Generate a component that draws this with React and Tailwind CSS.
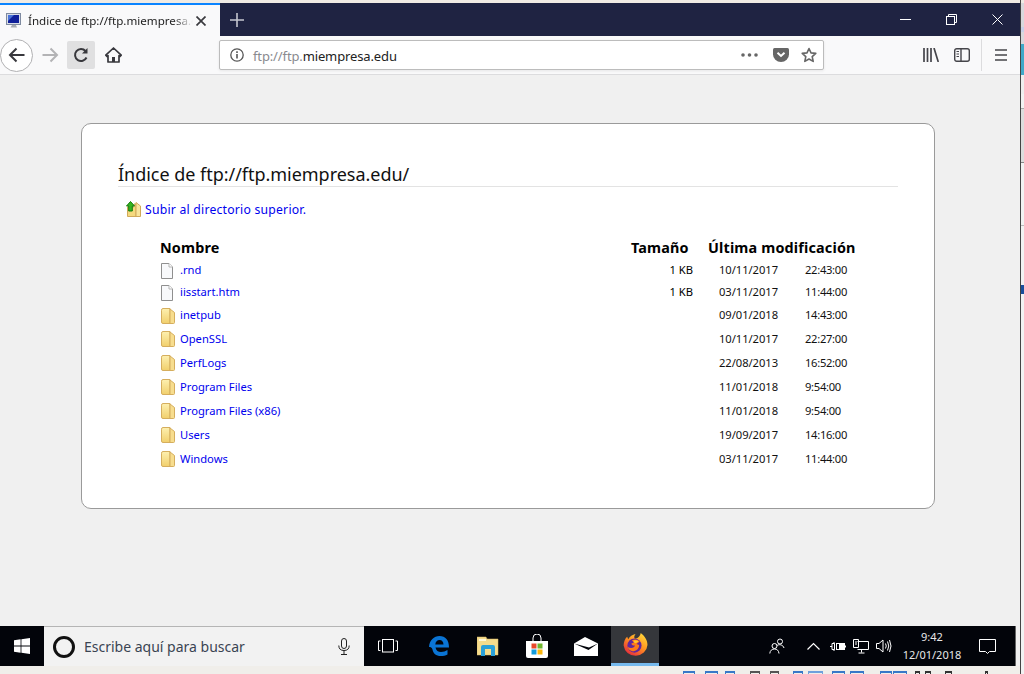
import React from "react";

const font = { fontFamily: '"Noto Sans", "Open Sans", sans-serif' };

function Slot({ w, className = "", children }) {
  return <div className={`flex items-center justify-center shrink-0 h-full ${className}`} style={{ width: w }}>{children}</div>;
}

function FolderIcon() {
  return (
    <svg width="14" height="16" viewBox="0 0 14 16">
      <defs>
        <linearGradient id="fg" x1="0" y1="0" x2="0" y2="1">
          <stop offset="0" stopColor="#fdf0b0" />
          <stop offset="1" stopColor="#f1cf6c" />
        </linearGradient>
      </defs>
      <path d="M.5 2.2Q.5.5 2 .5H9V15.5H2Q.5 15.5 .5 14Z" fill="url(#fg)" stroke="#d5ae5e" />
      <path d="M9 1 13.5 4.5V14.5Q13.5 15.5 12.5 15.5H9Z" fill="#f7dd8e" stroke="#d5ae5e" />
    </svg>
  );
}

function FileIcon() {
  return (
    <svg width="12" height="16" viewBox="0 0 12 16">
      <path d="M.5.5H8L11.5 4V15.5H.5Z" fill="#f8f9fb" stroke="#8f8f8f" />
      <path d="M8 .5V4H11.5" fill="#fff" stroke="#b5b5b5" />
    </svg>
  );
}

function UpIcon() {
  return (
    <svg width="15" height="17" viewBox="0 0 15 17" className="mb-[2px] shrink-0">
      <path d="M1.5 6V15.5H10V3H8V6Z" fill="#f5d97e" stroke="#d0a95a" />
      <path d="M10 1.5 14.5 5V15.5H10Z" fill="#f9e59c" stroke="#d0a95a" />
      <path d="M4.5.5 8.5 5H6.3V10H2.7V5H.5Z" fill="#35b51f" stroke="#157a0d" />
    </svg>
  );
}

const rows = [
  ["file", ".rnd", "1 KB", "10/11/2017", "22:43:00", "h-[21px]"],
  ["file", "iisstart.htm", "1 KB", "03/11/2017", "11:44:00", "h-[23px]"],
  ["dir", "inetpub", "", "09/01/2018", "14:43:00", "h-[23px]"],
  ["dir", "OpenSSL", "", "10/11/2017", "22:27:00", "h-6"],
  ["dir", "PerfLogs", "", "22/08/2013", "16:52:00", "h-6"],
  ["dir", "Program Files", "", "11/01/2018", "9:54:00", "h-6"],
  ["dir", "Program Files (x86)", "", "11/01/2018", "9:54:00", "h-6"],
  ["dir", "Users", "", "19/09/2017", "14:16:00", "h-6"],
  ["dir", "Windows", "", "03/11/2017", "11:44:00", "h-6"],
];

function Row({ type, name, size, date, time, h }) {
  return (
    <div className={`flex items-center text-[11.2px] ${h}`}>
      <div className="w-[20px] flex justify-start pl-[1px] shrink-0">
        {type === "file" ? <FileIcon /> : <FolderIcon />}
      </div>
      <a className="w-[420px] shrink-0 text-[#0000ee]">{name}</a>
      <div className="w-[93px] shrink-0 text-right text-black">{size}</div>
      <div className="w-[26px] shrink-0" />
      <div className="w-[86px] shrink-0 text-[#111] tracking-[-0.05px]">{date}</div>
      <div className="text-[#111] tracking-[-0.3px]">{time}</div>
    </div>
  );
}

function TabStrip() {
  return (
    <div className="h-[33px] flex bg-[#1f2342] shrink-0">
      <div className="w-[220px] bg-[#f9f9fa] border-t-[2px] border-[#0a84ff] flex items-center pl-[6px] shrink-0">
        <svg width="16" height="16" viewBox="0 0 16 16" className="shrink-0">
          <rect x=".5" y=".5" width="14" height="11" fill="#d9dde6" stroke="#7e8aa0" />
          <rect x="2" y="2" width="11" height="8" fill="#10209a" />
          <path d="M2 2H8L2 8Z" fill="#4a73d8" />
          <path d="M6 12H10L11 14.5H4.5Z" fill="#a7abb2" />
        </svg>
        <span className="ml-[6px] w-[165px] text-[11.6px] text-[#222] whitespace-nowrap [mask-image:linear-gradient(to_right,black_88%,transparent)]">Índice de ftp://ftp.miempresa.e</span>
        <svg width="10" height="10" viewBox="0 0 10 10" className="ml-[3px]">
          <path d="M.5.5 9.5 9.5M9.5.5.5 9.5" stroke="#3a3a3e" strokeWidth="1.7" />
        </svg>
      </div>
      <Slot w={33}>
        <svg width="14" height="14" viewBox="0 0 14 14"><path d="M7 0V14M0 7H14" stroke="#c5c6cf" strokeWidth="1.6" /></svg>
      </Slot>
      <div className="flex-1" />
      <Slot w={46}><svg width="11" height="11" viewBox="0 0 11 11"><path d="M0 5.5H11" stroke="#fff" /></svg></Slot>
      <Slot w={46}>
        <svg width="11" height="11" viewBox="0 0 11 11" fill="none" stroke="#fff"><rect x=".5" y="2.5" width="8" height="8" /><path d="M2.5 2.5V.5H10.5V8.5H8.5" /></svg>
      </Slot>
      <Slot w={46}><svg width="11" height="11" viewBox="0 0 11 11"><path d="M.5.5 10.5 10.5M10.5.5.5 10.5" stroke="#fff" /></svg></Slot>
    </div>
  );
}

function Toolbar() {
  return (
    <div className="h-[39px] bg-[#f9f9fa] border-b border-[#dcdcde] flex items-center shrink-0">
      <div className="w-[33px] h-[33px] shrink-0 rounded-full bg-white border border-[#b1b1b3] flex items-center justify-center">
        <svg width="17" height="16" viewBox="0 0 17 16" fill="none" stroke="#38383d" strokeWidth="2"><path d="M16.5 8H2M8.5 1.5 2 8 8.5 14.5" /></svg>
      </div>
      <Slot w={34}>
        <svg width="17" height="16" viewBox="0 0 17 16" fill="none" stroke="#b3b3b5" strokeWidth="2"><path d="M.5 8H15M8.5 1.5 15 8 8.5 14.5" /></svg>
      </Slot>
      <div className="w-[28px] h-[28px] bg-[#e0e0e1] rounded-[2px] shrink-0 flex items-center justify-center">
        <svg width="16" height="16" viewBox="0 0 16 16" fill="none" stroke="#38383d" strokeWidth="2">
          <path d="M13.5 10.5A6 6 0 1 1 12.5 4" />
          <path d="M14.5 1V6.5H9" fill="#38383d" stroke="none" />
        </svg>
      </div>
      <Slot w={36}>
        <svg width="17" height="16" viewBox="0 0 17 16">
          <path d="M8.5 1 .8 8.2 2 9.5 3 8.6V15H14V8.6L15 9.5 16.2 8.2Z" fill="none" stroke="#38383d" strokeWidth="1.7" strokeLinejoin="round" />
          <rect x="7" y="10" width="3" height="5" fill="#38383d" />
        </svg>
      </Slot>
      <div className="w-[88px] shrink-0" />
      <div className="w-[605px] h-[30px] shrink-0 bg-white border border-[#bcbcbc] rounded-[2px] flex items-center shadow-[0_1px_3px_rgba(0,0,0,0.08)]">
        <Slot w={33}>
          <svg width="14" height="14" viewBox="0 0 14 14" fill="none" stroke="#555"><circle cx="7" cy="7" r="6.2" strokeWidth="1.3" /><path d="M7 6V10.5" strokeWidth="1.6" /><path d="M7 3.2V5" strokeWidth="1.6" /></svg>
        </Slot>
        <div className="text-[13px] flex-1 tracking-[-0.13px] pt-[3px]"><span className="text-[#8a8a8f]">ftp://ftp.</span><span className="text-[#222]">miempresa.edu</span></div>
        <Slot w={24}>
          <svg width="17" height="4" viewBox="0 0 17 4" fill="#666"><circle cx="2" cy="2" r="1.8" /><circle cx="8.5" cy="2" r="1.8" /><circle cx="15" cy="2" r="1.8" /></svg>
        </Slot>
        <div className="w-[8px]" />
        <Slot w={24}>
          <svg width="16" height="14" viewBox="0 0 16 14"><path d="M1.5 0H14.5Q16 0 16 1.5V6.5A8 7.5 0 0 1 0 6.5V1.5Q0 0 1.5 0Z" fill="#666" /><path d="M4.5 4.8 8 8 11.5 4.8" fill="none" stroke="#fff" strokeWidth="2" /></svg>
        </Slot>
        <div className="w-[4px]" />
        <Slot w={24}>
          <svg width="16" height="16" viewBox="0 0 16 16"><path d="M8 1.5 10 5.9 14.8 6.4 11.2 9.6 12.2 14.4 8 12 3.8 14.4 4.8 9.6 1.2 6.4 6 5.9Z" fill="none" stroke="#666" strokeWidth="1.6" strokeLinejoin="round" /></svg>
        </Slot>
        <div className="w-[2px]" />
      </div>
      <div className="w-[98px] shrink-0" />
      <Slot w={18}>
        <svg width="16" height="14" viewBox="0 0 16 14" stroke="#45454a" strokeWidth="1.7"><path d="M1 0V14M4.5 0V14M8 0V14M11 0 15.3 14" fill="none" /></svg>
      </Slot>
      <div className="w-[13px] shrink-0" />
      <Slot w={18}>
        <svg width="16" height="14" viewBox="0 0 16 14" fill="none" stroke="#45454a" strokeWidth="1.4"><rect x=".7" y=".7" width="14.6" height="12.6" rx="2" /><path d="M7 .7V13.3" /><path d="M2.5 3.5H5M2.5 6H5M2.5 8.5H5" strokeWidth="1.2" /></svg>
      </Slot>
      <div className="w-[10px] shrink-0" />
      <div className="w-px h-[32px] bg-[#dcdcde] shrink-0" />
      <div className="w-[13px] shrink-0" />
      <Slot w={12}>
        <svg width="12" height="12" viewBox="0 0 12 12" stroke="#45454a" strokeWidth="1.7"><path d="M0 1H12M0 6H12M0 11H12" /></svg>
      </Slot>
    </div>
  );
}

function Card() {
  return (
    <div className="ml-[81px] mt-[48px] w-[854px] h-[386px] bg-white border border-[#9a9a9a] rounded-[10px] pl-[36px] pr-[36px] pt-[37px] text-[#111] shrink-0">
      <h1 className="text-[18px] leading-[26px] border-b border-[#e3e3e3] h-[26px] text-[#111] tracking-[-0.03px]">Índice de ftp://ftp.miempresa.edu/</h1>
      <div className="flex items-center mt-[15px] ml-[8px] h-[17px]">
        <UpIcon />
        <a className="ml-[4px] text-[12.2px] text-[#0000ee] tracking-[0.23px]">Subir al directorio superior.</a>
      </div>
      <div className="ml-[42px] mt-[18px] w-[720px]">
        <div className="flex h-[21px] items-center font-bold text-[14.4px] text-black tracking-[0.16px]">
          <div className="w-[471px] shrink-0">Nombre</div>
          <div className="w-[77px] shrink-0">Tamaño</div>
          <div>Última modificación</div>
        </div>
        <div className="mt-[2px]">
          {rows.map((r) => <Row key={r[1]} type={r[0]} name={r[1]} size={r[2]} date={r[3]} time={r[4]} h={r[5]} />)}
        </div>
      </div>
    </div>
  );
}

function FirefoxIcon() {
  return (
    <svg width="25" height="25" viewBox="0 0 24 24">
      <defs>
        <linearGradient id="ff1" x1=".85" y1="0" x2=".15" y2="1">
          <stop offset="0" stopColor="#ffdc3c" />
          <stop offset=".45" stopColor="#ff9520" />
          <stop offset="1" stopColor="#e3203f" />
        </linearGradient>
      </defs>
      <path d="M17 1C21 4 23.5 8 23.5 12.5A11.5 11 0 0 1 .6 13C.6 9.5 2 6 4 4.5L5 7C6.5 4.5 9 2.5 12 2 10.5 4 10.5 5.5 11.5 6.5 14 6 16.5 4.5 17 1Z" fill="url(#ff1)" />
      <circle cx="11" cy="13" r="6.8" fill="#62279c" />
      <path d="M8.5 8Q13 6 16 9L13 11.5 15.5 12.5C15.5 16 13 18.5 9 18.5 6.5 18 5 16.5 4.5 14.5 7.5 16 11 15.5 11.5 13 9 13 8 12 8 11L10.5 10Z" fill="#ff7a18" />
      <path d="M10 8.2Q13 7.4 15 9L12.2 10.8 10.5 10Z" fill="#ffc62b" />
    </svg>
  );
}

const trayBits = [
  [683, 12, "border-[#3878c8]"], [705, 13, "border-[#3878c8]"], [725, 10, "border-[#3878c8]"],
  [750, 10, "border-[#555]"], [770, 9, "border-[#555]"], [793, 10, "border-[#3878c8]"],
  [808, 15, "border-[#6fa0dc]"], [832, 13, "border-[#3878c8]"], [850, 14, "border-[#3878c8]"],
  [880, 12, "border-[#3878c8]"], [893, 14, "border-[#3878c8]"],
  [915, 5, "border-[#333]"], [925, 6, "border-[#333]"], [945, 7, "border-[#333]"], [985, 3, "border-[#333]"],
];

function Taskbar() {
  return (
    <div className="h-[40px] w-[1016px] bg-[#02040a] border-r border-[#666] flex items-center shrink-0 text-white">
      <Slot w={44}>
        <svg width="16" height="16" viewBox="0 0 16 16" fill="#fff"><path d="M0 2.3 6.6 1.3V7.6H0ZM7.4 1.2 16 0V7.6H7.4ZM0 8.4H6.6V14.7L0 13.7ZM7.4 8.4H16V16L7.4 14.8Z" /></svg>
      </Slot>
      <div className="w-[320px] h-full shrink-0 bg-[#f2f2f2] border-t border-[#b5b5b5] flex items-center">
        <div className="w-[22px] h-[22px] ml-[9px] rounded-full border-[3px] border-[#111] shrink-0" />
        <div className="ml-[9px] text-[14px] text-[#3a4452] flex-1 whitespace-nowrap">Escribe aquí para buscar</div>
        <svg width="12" height="17" viewBox="0 0 12 17" fill="none" stroke="#222" className="mr-[14px]"><rect x="3.5" y=".5" width="5" height="10" rx="2.5" /><path d="M.8 7.5Q.8 12.5 6 12.5 11.2 12.5 11.2 7.5M6 12.5V16M3 16.5H9" /></svg>
      </div>
      <Slot w={48}>
        <svg width="20" height="14" viewBox="0 0 20 14" fill="none" stroke="#fff"><rect x="4.5" y=".5" width="11" height="12.5" /><path d="M2.5 2H.5V11.5H2.5M17.5 2H19.5V11.5H17.5" /></svg>
      </Slot>
      <Slot w={54}>
        <svg width="20" height="20" viewBox="0 0 20 20">
          <path d="M0 11C.5 4 5 0 10.5 0 16.5 0 20 4 20 11.5H6.5C7 14.5 9.3 16 12 16 14.5 16 16.5 15.2 18.5 14V18.4C16.5 19.5 14.3 20 11.8 20 7 20 4 17.3 3.5 13.5 3 11.5 1.5 11 0 11ZM6.3 8.5H14.5C14.3 5.7 13 4 10.5 4 8.2 4 6.6 5.7 6.3 8.5Z" fill="#0a74d4" fillRule="evenodd" />
        </svg>
      </Slot>
      <Slot w={44}>
        <svg width="22" height="20" viewBox="0 0 22 20">
          <path d="M0 1H9L10 3H21V19H0Z" fill="#f5dc8c" stroke="#d9bb68" strokeWidth=".5" />
          <rect x="2" y="3" width="7" height="2" fill="#fff8d8" />
          <path d="M4 20V11Q4 9 6 9H16Q18 9 18 11V20H14V13H8V20Z" fill="#2aa0d8" />
        </svg>
      </Slot>
      <Slot w={54}>
        <svg width="24" height="25" viewBox="0 0 24 25">
          <path d="M8 8V4A4 4 0 0 1 16 4V8" fill="none" stroke="#fff" strokeWidth="1" />
          <path d="M1 7H23V22Q23 24 21 24H3Q1 24 1 22Z" fill="#fff" />
          <rect x="6.5" y="9.5" width="5" height="5" fill="#e8482a" />
          <rect x="12.5" y="9.5" width="5" height="5" fill="#6fb52c" />
          <rect x="6.5" y="15.5" width="5" height="5" fill="#129bdc" />
          <rect x="12.5" y="15.5" width="5" height="5" fill="#fbb60d" />
        </svg>
      </Slot>
      <Slot w={44}>
        <svg width="24" height="19" viewBox="0 0 24 19">
          <path d="M0 6.5 11 0 24 6.5V19H0Z" fill="#fff" />
          <path d="M0 6.5 14.5 13 24 6.5 15 10.5Z" fill="#02040a" />
        </svg>
      </Slot>
      <div className="w-[3px] shrink-0" />
      <div className="w-[48px] h-full bg-[#35373b] border-b-[3px] border-[#76b9ed] flex items-center justify-center shrink-0">
        <FirefoxIcon />
      </div>
      <div className="w-[106px] shrink-0" />
      <Slot w={24}>
        <svg width="16" height="16" viewBox="0 0 16 16" fill="none" stroke="#fff" strokeWidth="1"><circle cx="5.5" cy="8" r="2.5" /><circle cx="11" cy="3.5" r="2.5" /><path d="M.8 15.5C1 12.5 3 11 5.5 11 8 11 9.7 12.5 10 15.5M8 7.5C10 6 14 6.5 15 10" /></svg>
      </Slot>
      <div className="w-[12px] shrink-0" />
      <Slot w={24}>
        <svg width="13" height="8" viewBox="0 0 13 8" fill="none" stroke="#fff" strokeWidth="1.2"><path d="M.5 7.5 6.5 1.5 12.5 7.5" /></svg>
      </Slot>
      <Slot w={25}>
        <svg width="16" height="13" viewBox="0 0 16 13" fill="none" stroke="#fff"><path d="M0 6.5H2M2 3.5H4.5V9.5H2ZM4 2V4M4 9V11" /><rect x="6.5" y="3.5" width="8" height="6" /><rect x="9" y="4" width="5" height="5" fill="#fff" stroke="none" /><path d="M15.5 5.5V7.5" /></svg>
      </Slot>
      <Slot w={22}>
        <svg width="16" height="15" viewBox="0 0 16 15" fill="none" stroke="#fff"><path d="M4.5 2.5H15.5V10.5H4.5M.5.5H5.5V8.5H.5ZM2 3H4M2 5H4M8.5 10.5V13.5M5.5 14H11.5" /></svg>
      </Slot>
      <Slot w={24}>
        <svg width="16" height="14" viewBox="0 0 16 14" fill="none" stroke="#fff"><path d="M.5 4.5H3L7 1V13L3 9.5H.5ZM9.5 4.5Q11 7 9.5 9.5M11.5 2.5Q14 7 11.5 11.5M13.5 1Q16.5 7 13.5 13" /></svg>
      </Slot>
      <div className="w-[72px] shrink-0 flex flex-col items-center text-[11px] leading-[18px] text-[#e8e8e8]">
        <div>9:42</div>
        <div>12/01/2018</div>
      </div>
      <div className="w-[4px] shrink-0" />
      <Slot w={30}>
        <svg width="17" height="15" viewBox="0 0 17 15" fill="none" stroke="#fff"><path d="M.5.5H16.5V12.5H10.5L8.5 14.5 6.5 12.5H.5Z" /></svg>
      </Slot>
    </div>
  );
}

export default function App() {
  return (
    <div className="w-[1024px] h-[674px] relative overflow-hidden bg-[#f0eeea] flex" style={font}>
      <div className="w-[1020px] shrink-0 flex flex-col">
        <div className="h-[3px] bg-[#f0ebe4] shrink-0" />
        <TabStrip />
        <Toolbar />
        <div className="h-[551px] bg-[#f0f0f0] shrink-0 overflow-hidden">
          <Card />
        </div>
        <div className="h-[40px] bg-[#f0f0f0] shrink-0">
          <Taskbar />
        </div>
        <div className="flex-1 bg-[#f0eeea] flex items-end overflow-hidden">
          {trayBits.map(([x, w, c], i) => (
            <div
              key={i}
              className={`h-[3px] border-t-2 border-l border-r shrink-0 ${c}`}
              style={{ width: w, marginLeft: x - (i ? trayBits[i - 1][0] + trayBits[i - 1][1] : 0) }}
            />
          ))}
        </div>
      </div>
      <div className="w-[4px] shrink-0 border-l border-[#444] flex flex-col">
        <div className="h-[3px] bg-[#f0ebe4]" />
        <div className="h-[24px] bg-[#d8d8dc]" />
        <div className="h-[5px] bg-[#c8d0e8]" />
        <div className="h-[12px] bg-[#d8d8dc]" />
        <div className="h-[31px] bg-[#40a9c9]" />
        <div className="h-[19px] bg-[#eeeeee]" />
        <div className="h-[15px] bg-[#f2f2f2] border-b border-[#aaa]" />
        <div className="h-[54px] bg-[#dddddd] border-b border-[#888]" />
        <div className="h-[63px] bg-[#f2f2f2] border-b border-[#bbb]" />
        <div className="h-[59px] bg-[#f2f2f2]" />
        <div className="h-[9px] bg-[#1a4f9c]" />
        <div className="flex-1 bg-[#f2f2f2]" />
      </div>
    </div>
  );
}
